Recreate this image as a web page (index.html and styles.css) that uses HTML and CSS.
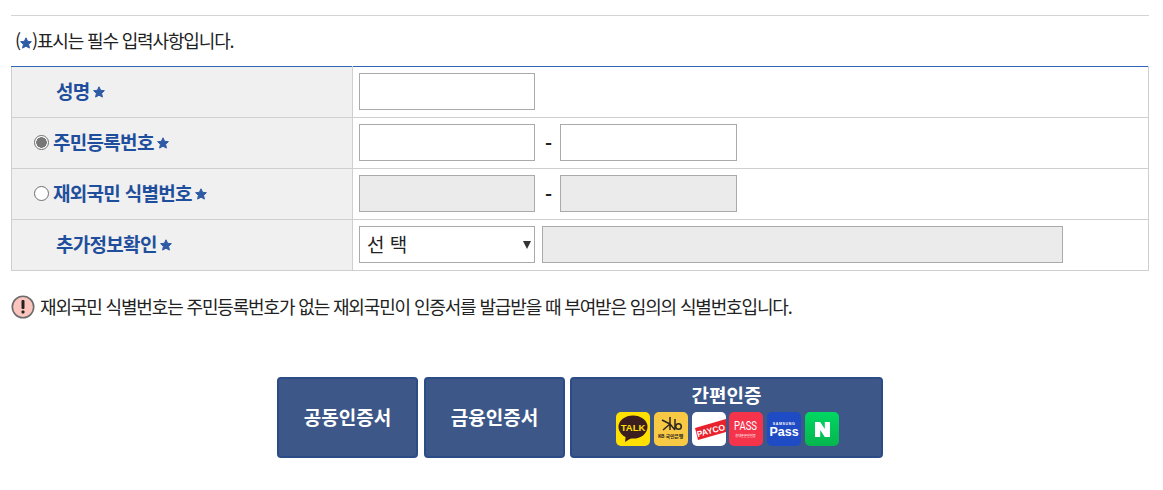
FILE: index.html
```html
<!DOCTYPE html>
<html lang="ko">
<head>
  <meta charset="UTF-8">
  <title>본인확인</title>
  <link rel="stylesheet" href="styles.css">
</head>
<body>
  <svg class="defs" width="0" height="0">
    <symbol id="star" viewBox="0 0 12 12">
      <path d="M6 .8l1.6 3.5 3.8.4-2.8 2.6.8 3.8L6 9.2l-3.4 1.9.8-3.8L.6 4.7l3.8-.4z" stroke="#2f5ba5" stroke-width="1" stroke-linejoin="round"/>
    </symbol>
  </svg>
  <div class="container">
    <p class="guide">(<svg class="star star-guide"><use href="#star"/></svg>)<span class="guide-text">표시는 필수 입력사항입니다.</span></p>

    <table class="form-table">
      <tr>
        <th><div class="label no-radio">성명<svg class="star"><use href="#star"/></svg></div></th>
        <td><div class="fields"><input type="text" class="box"></div></td>
      </tr>
      <tr>
        <th><label class="label"><input type="radio" name="idType" class="radio" checked>주민등록번호<svg class="star"><use href="#star"/></svg></label></th>
        <td>
          <div class="fields">
            <input type="text" class="box">
            <span class="dash">-</span>
            <input type="text" class="box box-back">
          </div>
        </td>
      </tr>
      <tr>
        <th><label class="label"><input type="radio" name="idType" class="radio">재외국민 식별번호<svg class="star"><use href="#star"/></svg></label></th>
        <td>
          <div class="fields">
            <input type="text" class="box off" disabled>
            <span class="dash">-</span>
            <input type="text" class="box box-back off" disabled>
          </div>
        </td>
      </tr>
      <tr>
        <th><div class="label no-radio">추가정보확인<svg class="star"><use href="#star"/></svg></div></th>
        <td>
          <div class="fields fields-select">
            <div class="select-wrap">
              <select class="select"><option>선 택</option></select>
            </div>
            <input type="text" class="box box-wide off" disabled>
          </div>
        </td>
      </tr>
    </table>

    <p class="notice">
      <svg class="notice-icon" viewBox="0 0 24 24">
        <circle cx="12" cy="12" r="10.7" fill="#fbc4bd" stroke="#6b6b6b" stroke-width="1.6"/>
        <rect x="10.5" y="5" width="3" height="9" rx="1" fill="#222"/>
        <rect x="10.5" y="15.6" width="3" height="3" rx="1" fill="#222"/>
      </svg>
      재외국민 식별번호는 주민등록번호가 없는 재외국민이 인증서를 발급받을 때 부여받은 임의의 식별번호입니다.
    </p>

    <div class="btn-row">
      <button class="cert-btn">공동인증서</button>
      <button class="cert-btn">금융인증서</button>
      <button class="cert-btn cert-easy">
        <span class="easy-title">간편인증</span>
        <span class="easy-icons">
          <svg class="app" viewBox="0 0 34 34">
            <rect width="34" height="34" rx="5" fill="#ffe000"/>
            <ellipse cx="17" cy="15" rx="14.5" ry="11.5" fill="#3c1e1e"/>
            <path d="M10 22l-1 8 8-5z" fill="#3c1e1e"/>
            <text x="17" y="18.5" class="app-text talk">TALK</text>
          </svg>
          <svg class="app" viewBox="0 0 34 34">
            <rect width="34" height="34" rx="5" fill="#f8c945"/>
            <path d="M8 8l8 4M16 5v13M16 12l-7 6M16 12l5 6M21 7v10" stroke="#2c2620" stroke-width="1.5" fill="none"/>
            <circle cx="24.5" cy="14.5" r="2.8" fill="none" stroke="#2c2620" stroke-width="1.5"/>
            <text x="16.5" y="26" class="app-text kb">KB 국민은행</text>
          </svg>
          <svg class="app" viewBox="0 0 34 34">
            <rect width="34" height="34" rx="5" fill="#fff"/>
            <path d="M3 16L34 7v13L6 28z" fill="#e8212d"/>
            <text x="19" y="21.5" class="app-text payco" transform="rotate(-15 19 19)">PAYCO</text>
          </svg>
          <svg class="app" viewBox="0 0 34 34">
            <rect width="34" height="34" rx="5" fill="#f5344c"/>
            <text x="16.5" y="18" class="app-text pass" textLength="23" lengthAdjust="spacingAndGlyphs">PASS</text>
            <text x="16.5" y="25" class="app-text pass-sub">휴대폰본인인증</text>
          </svg>
          <svg class="app" viewBox="0 0 34 34">
            <rect width="34" height="34" rx="5" fill="#1f4cc4"/>
            <text x="17" y="13" class="app-text sam">SAMSUNG</text>
            <text x="17" y="24" class="app-text spass">Pass</text>
          </svg>
          <svg class="app" viewBox="0 0 34 34">
            <defs>
              <linearGradient id="naverBg" x1="0" y1="0" x2="0" y2="1">
                <stop offset="0" stop-color="#00d862"/>
                <stop offset="1" stop-color="#06b54e"/>
              </linearGradient>
            </defs>
            <rect width="34" height="34" rx="5" fill="url(#naverBg)"/>
            <path d="M10 10h5.2l4.6 7v-7H25v15h-5.2l-4.6-7v7H10z" fill="#fff"/>
          </svg>
        </span>
      </button>
    </div>
  </div>
</body>
</html>
```

FILE: styles.css
```css
body {
  margin: 0;
  font-family: "Noto Sans CJK KR", "Noto Sans", sans-serif;
  color: #222;
  background: #fff;
}

.defs {
  position: absolute;
}

.container {
  margin: 15px 14px 0 11px;
  border-top: 1px solid #d4d4d4;
}

.guide {
  margin: 0;
  height: 50px;
  padding: 11px 0 0 4px;
  box-sizing: border-box;
  font-size: 18px;
  line-height: 26px;
  letter-spacing: -1.15px;
}

.star {
  flex: none;
  width: 12px;
  height: 12px;
  margin-left: 3px;
  margin-top: 3px;
  fill: #2f5ba5;
}

.star-guide {
  margin: 0;
  vertical-align: -1px;
}

.form-table {
  width: 100%;
  border-collapse: collapse;
  table-layout: fixed;
  border-top: 1px solid #2f67b8;
}

.form-table th,
.form-table td {
  height: 50px;
  padding: 0;
  border: 1px solid #cfcfcf;
}

.form-table tr:first-child th,
.form-table tr:first-child td {
  border-top: 1px solid #2f67b8;
}

.form-table th {
  width: 340px;
  background: #f0f0f0;
  text-align: left;
}

.label {
  display: flex;
  align-items: center;
  height: 28px;
  margin-bottom: 4px;
  padding-left: 22px;
  font-size: 19px;
  font-weight: 700;
  letter-spacing: -0.7px;
  color: #1f4f9c;
}

.no-radio {
  padding-left: 44px;
}

.radio {
  appearance: none;
  flex: none;
  width: 15px;
  height: 15px;
  margin: 2px 4px 0 0;
  border: 1px solid #6e6e6e;
  border-radius: 50%;
  background: #fff;
}

.radio:checked {
  background: radial-gradient(circle, #777 0, #777 5px, #fff 5.5px);
}

.fields {
  display: flex;
  align-items: center;
  padding-left: 6px;
  margin-bottom: 1px;
}

.box {
  width: 176px;
  height: 37px;
  box-sizing: border-box;
  border: 1px solid #aaa;
  background: #fff;
  border-radius: 0;
  padding: 0;
}

.box-back {
  width: 177px;
}

.box-wide {
  width: 521px;
  margin-left: 7px;
}

.off {
  background: #ebebeb;
}

.dash {
  width: 25px;
  padding-left: 2px;
  box-sizing: border-box;
  text-align: center;
  font-size: 19px;
  font-weight: 700;
}

.select-wrap {
  position: relative;
  width: 176px;
  height: 37px;
}

.select-wrap::after {
  content: "";
  position: absolute;
  right: 4px;
  top: 15px;
  border-left: 4px solid transparent;
  border-right: 4px solid transparent;
  border-top: 8px solid #333;
}

.select {
  appearance: none;
  width: 100%;
  height: 100%;
  box-sizing: border-box;
  border: 1px solid #aaa;
  border-radius: 0;
  background: #fff;
  padding: 0 0 2px 7px;
  font-family: inherit;
  font-size: 19px;
  color: #222;
}

.notice {
  display: flex;
  align-items: center;
  gap: 5px;
  margin: 22px 0 0;
  height: 26px;
  font-size: 18px;
  letter-spacing: -1.15px;
}

.notice-icon {
  width: 24px;
  height: 24px;
  flex: none;
  margin-top: 2px;
}

.btn-row {
  display: flex;
  justify-content: center;
  gap: 6px;
  margin: 58px 0 0;
}

.cert-btn {
  width: 141px;
  height: 81px;
  padding: 0 0 2px;
  border: 2px solid #2b4c86;
  border-radius: 4px;
  background: #3d5888;
  color: #fff;
  font-family: inherit;
  font-size: 19px;
  font-weight: 700;
}

.cert-easy {
  width: 313px;
  margin-left: -1px;
  display: flex;
  flex-direction: column;
  align-items: center;
  padding-top: 3px;
}

.easy-title {
  line-height: 26px;
}

.easy-icons {
  display: flex;
  gap: 3.8px;
  margin: 4px 0 0 2px;
}

.app {
  width: 34px;
  height: 34px;
}

.app-text {
  font-family: "Liberation Sans", sans-serif;
  text-anchor: middle;
  font-weight: 700;
  fill: #fff;
}

.talk {
  font-size: 9.5px;
  fill: #ffe000;
}

.kb {
  font-family: "Noto Sans CJK KR", sans-serif;
  font-size: 5px;
  fill: #2c2620;
  letter-spacing: -0.2px;
}

.payco {
  font-size: 8.5px;
}

.pass {
  font-family: Roboto, sans-serif;
  font-size: 12.5px;
  font-weight: 400;
}

.pass-sub {
  font-family: "Noto Sans CJK KR", sans-serif;
  font-size: 3.2px;
  font-weight: 400;
}

.sam {
  font-size: 3.6px;
  letter-spacing: 0.6px;
}

.spass {
  font-size: 12.5px;
}
```
